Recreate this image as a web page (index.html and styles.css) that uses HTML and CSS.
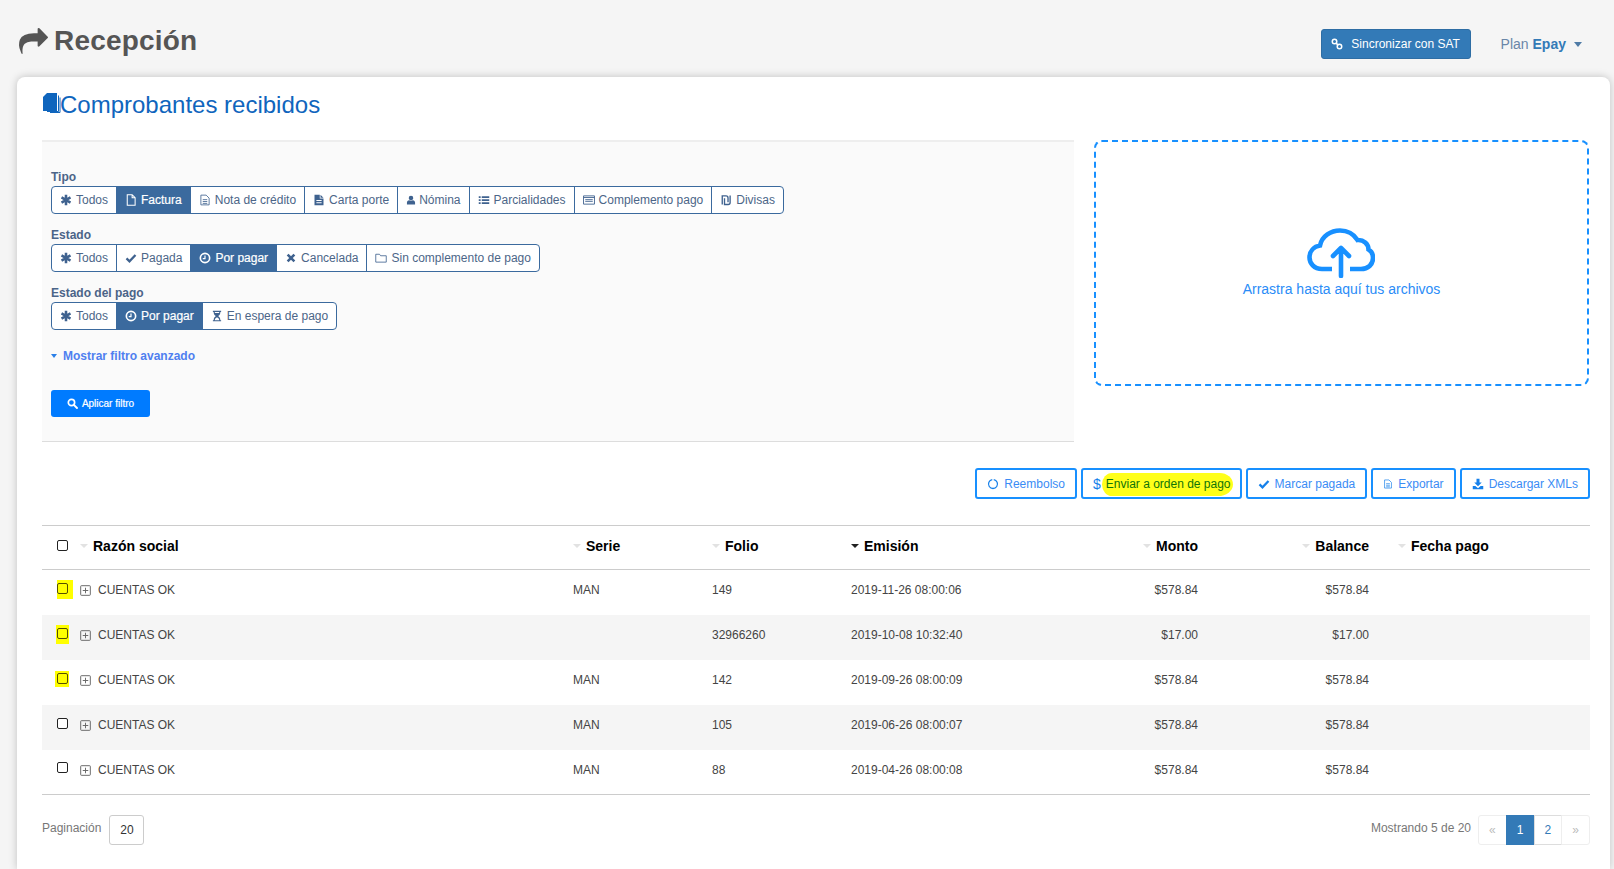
FILE: index.html
```html
<!DOCTYPE html>
<html lang="es">
<head>
<meta charset="utf-8">
<title>Recepción</title>
<link rel="stylesheet" href="styles.css">
</head>
<body>
<svg class="sprite" aria-hidden="true">
  <symbol id="i-ast" viewBox="0 0 16 16"><path d="M8 1v14M2 4.5l12 7M14 4.5l-12 7" fill="none" stroke="currentColor" stroke-width="3.4"/></symbol>
  <symbol id="i-file" viewBox="0 0 16 16"><path d="M3 1h6.5L13.5 5v10H3zM9.5 1v4h4" fill="none" stroke="currentColor" stroke-width="1.4"/></symbol>
  <symbol id="i-filetext" viewBox="0 0 16 16"><path d="M2.500 1.500h7l4 4v9h-11zM5 7.500h6M5 10h6M5 12.500h6" fill="none" stroke="currentColor" stroke-width="1.100"/></symbol>
  <symbol id="i-filesolid" viewBox="0 0 16 16"><path d="M2 1h7v5h5v9H2zM10 1l4 4h-4zM4.500 8v1.200h7V8zM4.500 11v1.200h7V11z" fill="currentColor" fill-rule="evenodd"/></symbol>
  <symbol id="i-user" viewBox="0 0 16 16"><path d="M8 1a3.600 3.600 0 0 1 3.600 3.800c0 1.700-1 3.400-3.600 3.400S4.400 6.500 4.400 4.800A3.600 3.600 0 0 1 8 1zM1.500 15v-3c0-2 1.500-3.400 3.500-3.700 1.500 1 4.500 1 6 0 2 .3 3.500 1.700 3.500 3.700v3z" fill="currentColor"/></symbol>
  <symbol id="i-list" viewBox="0 0 16 16"><path d="M1 3h2.500v2.200H1zM5 3h10v2.200H5zM1 7h2.500v2.200H1zM5 7h10v2.200H5zM1 11h2.500v2.200H1zM5 11h10v2.200H5z" fill="currentColor"/></symbol>
  <symbol id="i-listalt" viewBox="0 0 16 16"><path d="M.7 2.500h14.600v11H.7zM.7 4.700h14.600" fill="none" stroke="currentColor" stroke-width="1.200"/><path d="M3 6.500h10v1.200H3zM3 9h10v1.200H3z" fill="currentColor"/></symbol>
  <symbol id="i-ils" viewBox="0 0 16 16"><path d="M3 14V2.500h5c1.700 0 2.700 1 2.700 2.700V11M13.500 2v9.300c0 1.700-1 2.700-2.700 2.700H6V5.500" fill="none" stroke="currentColor" stroke-width="1.800"/></symbol>
  <symbol id="i-check" viewBox="0 0 16 16"><path d="M2 8.500l4 4 8-8.500" fill="none" stroke="currentColor" stroke-width="3"/></symbol>
  <symbol id="i-clock" viewBox="0 0 16 16"><circle cx="8" cy="8" r="6.200" fill="none" stroke="currentColor" stroke-width="2.200"/><path d="M8 4.500V8.700H5" fill="none" stroke="currentColor" stroke-width="1.600"/></symbol>
  <symbol id="i-x" viewBox="0 0 16 16"><path d="M3.500 3.500l9 9M12.500 3.500l-9 9" fill="none" stroke="currentColor" stroke-width="3.400"/></symbol>
  <symbol id="i-folder" viewBox="0 0 16 16"><path d="M1 3h5l1.500 2H15v8.500H1z" fill="none" stroke="currentColor" stroke-width="1.100"/></symbol>
  <symbol id="i-hour" viewBox="0 0 16 16"><path d="M2.500 1h11v1.500h-1c0 3-1.500 4.500-3 5.500 1.500 1 3 2.500 3 5.500h1V15h-11v-1.500h1c0-3 1.500-4.500 3-5.500-1.500-1-3-2.500-3-5.500h-1zM5 2.500c0 .5.100 1 .3 1.500h5.400c.2-.5.300-1 .3-1.500zM5 13.500h6c0-1.500-1-3-3-4-2 1-3 2.500-3 4z" fill="currentColor" fill-rule="evenodd"/></symbol>
  <symbol id="i-search" viewBox="0 0 16 16"><circle cx="6.500" cy="6.500" r="4.600" fill="none" stroke="currentColor" stroke-width="2.400"/><path d="M10 10l4.500 4.500" stroke="currentColor" stroke-width="2.800" stroke-linecap="round"/></symbol>
  <symbol id="i-link" viewBox="0 0 16 16"><circle cx="4.700" cy="4.700" r="3" fill="none" stroke="currentColor" stroke-width="2"/><circle cx="11.300" cy="11.300" r="3" fill="none" stroke="currentColor" stroke-width="2"/><path d="M6.500 6.500l3 3" stroke="currentColor" stroke-width="2"/></symbol>
  <symbol id="i-ring" viewBox="0 0 16 16"><path d="M7 2.100a6 6 0 1 0 2 0" fill="none" stroke="currentColor" stroke-width="1.700"/></symbol>
  <symbol id="i-down" viewBox="0 0 16 16"><path d="M6 1h4v5h3L8 11 3 6h3zM1 10.500h3.500L8 13.500l3.500-3H15V15H1z" fill="currentColor"/></symbol>
  <symbol id="i-plus" viewBox="0 0 16 16"><rect x="1" y="1" width="14" height="14" rx="1" fill="none" stroke="currentColor" stroke-width="1.400"/><path d="M8 4v8M4 8h8" stroke="currentColor" stroke-width="1.400"/></symbol>
  <symbol id="i-share" viewBox="0 0 1792 1792"><path d="M1792 640q0 26-19 45l-512 512q-19 19-45 19t-45-19-19-45v-256h-224q-98 0-175.500 6t-154 21.500-133 42.500-105.500 69.500-80 101-48.500 138.500-17.500 181q0 55 5 123 0 6 2.500 23.500t2.500 26.500q0 15-8.500 25t-23.500 10q-16 0-28-17-7-9-13-22t-13.500-30-10.500-24q-127-285-127-451 0-199 53-333 162-403 875-403h224v-256q0-26 19-45t45-19 45 19l512 512q19 19 19 45z" fill="currentColor"/></symbol>
  <symbol id="i-files" viewBox="0 0 18 20"><path d="M4 0h10v18H0V4z" fill="currentColor"/><path d="M15.500 2.500v16H4 M17 4.500v15H7" fill="none" stroke="currentColor" stroke-width="1"/></symbol>
</svg>

<div class="page">
  <header class="topbar">
    <h1 class="page-title"><svg class="ico-title"><use href="#i-share"/></svg>Recepción</h1>
    <div class="top-actions">
      <button class="btn-sync"><svg class="ico"><use href="#i-link"/></svg>Sincronizar con SAT</button>
      <div class="plan">Plan <b>Epay</b><span class="caret caret-plan"></span></div>
    </div>
  </header>

  <main class="card">
    <h2 class="section-title"><svg class="ico-files"><use href="#i-files"/></svg>Comprobantes recibidos</h2>

    <div class="upper">
      <section class="filters">
        <div class="f-label">Tipo</div>
        <div class="group">
          <a class="g-btn"><svg class="ico"><use href="#i-ast"/></svg>Todos</a>
          <a class="g-btn on"><svg class="ico"><use href="#i-file"/></svg>Factura</a>
          <a class="g-btn"><svg class="ico"><use href="#i-filetext"/></svg>Nota de crédito</a>
          <a class="g-btn"><svg class="ico"><use href="#i-filesolid"/></svg>Carta porte</a>
          <a class="g-btn"><svg class="ico ico-user"><use href="#i-user"/></svg>Nómina</a>
          <a class="g-btn"><svg class="ico"><use href="#i-list"/></svg>Parcialidades</a>
          <a class="g-btn"><svg class="ico"><use href="#i-listalt"/></svg>Complemento pago</a>
          <a class="g-btn"><svg class="ico"><use href="#i-ils"/></svg>Divisas</a>
        </div>
        <div class="f-label">Estado</div>
        <div class="group">
          <a class="g-btn"><svg class="ico"><use href="#i-ast"/></svg>Todos</a>
          <a class="g-btn"><svg class="ico"><use href="#i-check"/></svg>Pagada</a>
          <a class="g-btn on"><svg class="ico"><use href="#i-clock"/></svg>Por pagar</a>
          <a class="g-btn"><svg class="ico"><use href="#i-x"/></svg>Cancelada</a>
          <a class="g-btn"><svg class="ico"><use href="#i-folder"/></svg>Sin complemento de pago</a>
        </div>
        <div class="f-label">Estado del pago</div>
        <div class="group">
          <a class="g-btn"><svg class="ico"><use href="#i-ast"/></svg>Todos</a>
          <a class="g-btn on"><svg class="ico"><use href="#i-clock"/></svg>Por pagar</a>
          <a class="g-btn"><svg class="ico"><use href="#i-hour"/></svg>En espera de pago</a>
        </div>
        <a class="advanced"><span class="caret caret-adv"></span>Mostrar filtro avanzado</a>
        <button class="btn-apply"><svg class="ico-sm"><use href="#i-search"/></svg>Aplicar filtro</button>
      </section>

      <section class="dropzone">
        <svg class="cloud" viewBox="0 0 68 50">
          <path d="M25 41H15C7 41 2.500 35 2.500 29.500 2.500 23 7 18.500 13 17.500 15 8 24 2.500 33 2.500c8 0 14 4 17.500 9.500 6-.5 11 4 11 9.500 3.500 2 4.500 5.500 4.500 8.500 0 6.500-5 11-12 11H43" fill="none" stroke="currentColor" stroke-width="4.600"/>
          <path d="M34 48V20M26 28l8-8 8 8" fill="none" stroke="currentColor" stroke-width="4.600" stroke-linecap="round" stroke-linejoin="round"/>
        </svg>
        <div class="drop-text">Arrastra hasta aquí tus archivos</div>
      </section>
    </div>

    <div class="actions">
      <button class="act"><svg class="ico"><use href="#i-ring"/></svg>Reembolso</button>
      <button class="act"><span class="dollar">$</span><span class="marker">Enviar a orden de pago</span></button>
      <button class="act"><svg class="ico"><use href="#i-check"/></svg>Marcar pagada</button>
      <button class="act"><svg class="ico ico-narrow"><use href="#i-filetext"/></svg>Exportar</button>
      <button class="act"><svg class="ico"><use href="#i-down"/></svg>Descargar XMLs</button>
    </div>

    <table class="grid">
      <colgroup>
        <col class="c-check"><col class="c-name"><col class="c-serie"><col class="c-folio"><col class="c-date"><col class="c-monto"><col class="c-bal"><col class="c-pago">
      </colgroup>
      <thead>
        <tr>
          <th class="t-check"><input class="cb" type="checkbox" aria-label="Todos"></th>
          <th class="t-name"><span class="sort"></span>Razón social</th>
          <th><span class="sort"></span>Serie</th>
          <th><span class="sort"></span>Folio</th>
          <th><span class="sort active"></span>Emisión</th>
          <th class="num"><span class="sort"></span>Monto</th>
          <th class="num"><span class="sort"></span>Balance</th>
          <th class="t-pago"><span class="sort"></span>Fecha pago</th>
        </tr>
      </thead>
      <tbody>
        <tr>
          <td class="t-check"><span class="hl hl-a"><input class="cb cb-y" type="checkbox" aria-label="Fila 1"></span></td>
          <td class="t-name"><svg class="ico-plus"><use href="#i-plus"/></svg>CUENTAS OK</td>
          <td>MAN</td><td>149</td><td>2019-11-26 08:00:06</td><td class="num">$578.84</td><td class="num">$578.84</td><td></td>
        </tr>
        <tr>
          <td class="t-check"><span class="hl hl-b"><input class="cb cb-y" type="checkbox" aria-label="Fila 2"></span></td>
          <td class="t-name"><svg class="ico-plus"><use href="#i-plus"/></svg>CUENTAS OK</td>
          <td></td><td>32966260</td><td>2019-10-08 10:32:40</td><td class="num">$17.00</td><td class="num">$17.00</td><td></td>
        </tr>
        <tr>
          <td class="t-check"><span class="hl hl-c"><input class="cb cb-y" type="checkbox" aria-label="Fila 3"></span></td>
          <td class="t-name"><svg class="ico-plus"><use href="#i-plus"/></svg>CUENTAS OK</td>
          <td>MAN</td><td>142</td><td>2019-09-26 08:00:09</td><td class="num">$578.84</td><td class="num">$578.84</td><td></td>
        </tr>
        <tr>
          <td class="t-check"><input class="cb" type="checkbox" aria-label="Fila 4"></td>
          <td class="t-name"><svg class="ico-plus"><use href="#i-plus"/></svg>CUENTAS OK</td>
          <td>MAN</td><td>105</td><td>2019-06-26 08:00:07</td><td class="num">$578.84</td><td class="num">$578.84</td><td></td>
        </tr>
        <tr>
          <td class="t-check"><input class="cb" type="checkbox" aria-label="Fila 5"></td>
          <td class="t-name"><svg class="ico-plus"><use href="#i-plus"/></svg>CUENTAS OK</td>
          <td>MAN</td><td>88</td><td>2019-04-26 08:00:08</td><td class="num">$578.84</td><td class="num">$578.84</td><td></td>
        </tr>
      </tbody>
    </table>

    <footer class="foot">
      <div class="foot-left"><span class="muted">Paginación</span><span class="size">20</span></div>
      <div class="foot-right">
        <span class="muted">Mostrando 5 de 20</span>
        <nav class="pager">
          <a class="pg off">«</a><a class="pg cur">1</a><a class="pg">2</a><a class="pg off">»</a>
        </nav>
      </div>
    </footer>
  </main>
</div>
</body>
</html>
```

FILE: styles.css
```css
* { box-sizing: border-box; }
html, body { margin: 0; height: 100%; overflow: hidden; }
body { background: #f5f5f5; font-family: "Liberation Sans", Arial, sans-serif; font-size: 12px; color: #444; }
.sprite { display: none; }
.page { height: 100vh; display: flex; flex-direction: column; overflow: hidden; }

.topbar { height: 77px; flex: none; display: flex; justify-content: space-between; padding: 23px 32px 0 19px; }
.page-title { margin: 0; display: flex; align-items: center; height: 36px; font-size: 28px; font-weight: 700; color: #555; letter-spacing: .2px; }
.ico-title { width: 29px; height: 29px; margin-right: 6px; color: #555; }
.top-actions { display: flex; align-items: flex-start; padding-top: 6px; }
.btn-sync { height: 30px; width: 150px; display: flex; align-items: center; justify-content: center; gap: 8px; background: #337ab7; color: #fff; border: 1px solid #2e6da4; border-radius: 3px; font: 12px "Liberation Sans", Arial, sans-serif; }
.btn-sync .ico { width: 12px; height: 12px; }
.plan { margin-left: 30px; height: 30px; display: flex; align-items: center; font-size: 14px; color: #6a86a8; white-space: pre; }
.plan b { color: #337ab7; }
.caret { display: inline-block; width: 0; height: 0; border-left: 4px solid transparent; border-right: 4px solid transparent; border-top: 4px solid currentColor; }
.caret-plan { margin-left: 8px; border-width: 5px 4px 0; color: #4f7ba6; }

.card { flex: 1; margin: 0 4px 0 17px; padding: 0 20px 0 25px; background: #fff; border-radius: 8px 8px 0 0; box-shadow: 0 0 8px rgba(0,0,0,.22); }
.section-title { margin: 0; height: 63px; padding-top: 14px; display: flex; align-items: flex-start; font-size: 24px; font-weight: 400; line-height: 28px; color: #0f65bd; }
.ico-files { width: 18px; height: 20px; margin-top: 2px; margin-left: 1px; margin-right: -1px; color: #0f65bd; flex: none; }

.upper { display: flex; align-items: flex-start; gap: 20px; }
.filters { width: 1032px; flex: none; background: #fafafa; border-top: 2px solid #eee; border-bottom: 1px solid #ddd; padding: 28px 9px 24px; }
.f-label { font-size: 12px; line-height: 14px; font-weight: 700; color: #4b6488; margin: 0 0 2px; }
.group { display: inline-flex; height: 28px; margin-bottom: 14px; vertical-align: top; border: 1px solid #3b6a9e; border-radius: 4px; background: #fff; overflow: hidden; }
.filters .f-label { display: block; }
.g-btn { display: flex; align-items: center; gap: 4px; padding: 0 8px; color: #4c6688; border-left: 1px solid #3b6a9e; white-space: nowrap; }
.g-btn:first-child { border-left: 0; }
.g-btn.on { background: #3b6a9e; color: #fff; font-weight: 400; border-left-color: #3b6a9e; -webkit-text-stroke: .2px #fff; }
.ico { width: 12px; height: 12px; flex: none; }
.ico-narrow { width: 10px; }
.ico-user { width: 10px; margin-right: -1px; }
.g-btn .ico { color: #3f628f; }
.g-btn.on .ico { color: #fff; }
.advanced { display: flex; align-items: center; gap: 6px; margin-top: 5px; line-height: 14px; font-weight: 700; color: #4f7ff0; }
.caret-adv { color: #2a7fe8; border-width: 4px 3.500px 0; }
.btn-apply { display: flex; align-items: center; justify-content: center; gap: 4px; width: 99px; height: 27px; margin-top: 27px; background: #007bff; color: #fff; border: 0; border-radius: 3px; font: 10px "Liberation Sans", Arial, sans-serif; -webkit-text-stroke: .2px #fff; }
.ico-sm { width: 11px; height: 11px; }

.dropzone { flex: none; width: 495px; height: 246px; border: 2px dashed #1890ff; border-radius: 8px; display: flex; flex-direction: column; align-items: center; padding-top: 86px; color: #1890ff; }
.cloud { width: 68px; height: 50px; margin-left: -2px; }
.drop-text { margin-top: 3px; font-size: 14px; line-height: 16px; color: #2a8cf7; }

.actions { display: flex; justify-content: flex-end; gap: 4px; margin-top: 26px; }
.act { height: 31px; display: flex; align-items: center; gap: 5px; padding: 0 10px; background: #fff; border: 2px solid #1890ff; border-radius: 3px; color: #3a8cf5; font: 12px "Liberation Sans", Arial, sans-serif; }
.act .ico { color: #1680ea; }
.dollar { color: #1680ea; font-size: 14px; }
.marker { color: #0f7408; background: #ffff1a; padding: 4px 2px 5px 4px; margin: -4px -3px -5px -4px; border-radius: 12px 16px 18px 12px / 60%; }

.grid { width: 100%; table-layout: fixed; border-collapse: collapse; margin-top: 26px; border-top: 1px solid #ccc; border-bottom: 1px solid #ccc; }
.c-check { width: 38px; } .c-name { width: 485px; } .c-serie { width: 139px; } .c-folio { width: 139px; }
.c-date { width: 207px; } .c-monto { width: 156px; } .c-bal { width: 171px; }
.grid th { height: 44px; padding: 0 8px 3px; text-align: left; font-size: 14px; font-weight: 700; color: #000; border-bottom: 1px solid #ccc; white-space: nowrap; }
.grid td { height: 45px; padding: 0 8px 4px; font-size: 12px; color: #444; white-space: nowrap; }
.grid tbody tr:nth-child(even) { background: #f5f5f5; }
.grid .t-check { padding: 0 0 8px 15px; line-height: 0; }
.grid th.t-check { padding-bottom: 5px; }
.grid .t-name { padding-left: 0; }
.grid .num { text-align: right; }
.grid .t-pago { padding-left: 21px; }
.sort { display: inline-block; width: 0; height: 0; margin: 0 5px 2px 0; vertical-align: middle; border-left: 4px solid transparent; border-right: 4px solid transparent; border-top: 4px solid #e2e2e2; }
.sort.active { border-top-color: #222; }
.cb { appearance: none; display: block; width: 11px; height: 11px; margin: 0; border: 1px solid #222; border-radius: 2px; background: #fff; }
.cb-y { background: #ffff00; border-color: #554f00; }
.hl { display: inline-block; background: #ffff00; }
.hl-a { padding: 3px 5px 5px 0; margin: -3px -5px -5px 0; }
.hl-b { padding: 3px 1px 5px 1px; margin: -3px -1px -5px -1px; }
.hl-c { padding: 2px 1px 3px 2px; margin: -2px -1px -3px -2px; }
.ico-plus { width: 11px; height: 11px; margin-right: 7px; vertical-align: -2px; color: #666; }

.foot { display: flex; justify-content: space-between; margin-top: 20px; }
.foot-left, .foot-right { display: flex; align-items: flex-start; }
.muted { color: #777; line-height: 14px; margin-top: 6px; }
.size { width: 35px; height: 30px; margin-left: 8px; display: flex; align-items: center; justify-content: center; border: 1px solid #ccc; border-radius: 3px; color: #333; }
.pager { display: flex; margin-left: 7px; height: 30px; }
.pg { width: 28.750px; display: flex; align-items: center; justify-content: center; border: 1px solid #ddd; margin-left: -1px; color: #337ab7; }
.pg:first-child { margin-left: 0; border-radius: 3px 0 0 3px; }
.pg:last-child { border-radius: 0 3px 3px 0; }
.pg.off { color: #bbb; border-color: #eee; }
.pg.cur { background: #337ab7; border-color: #337ab7; color: #fff; }
```
